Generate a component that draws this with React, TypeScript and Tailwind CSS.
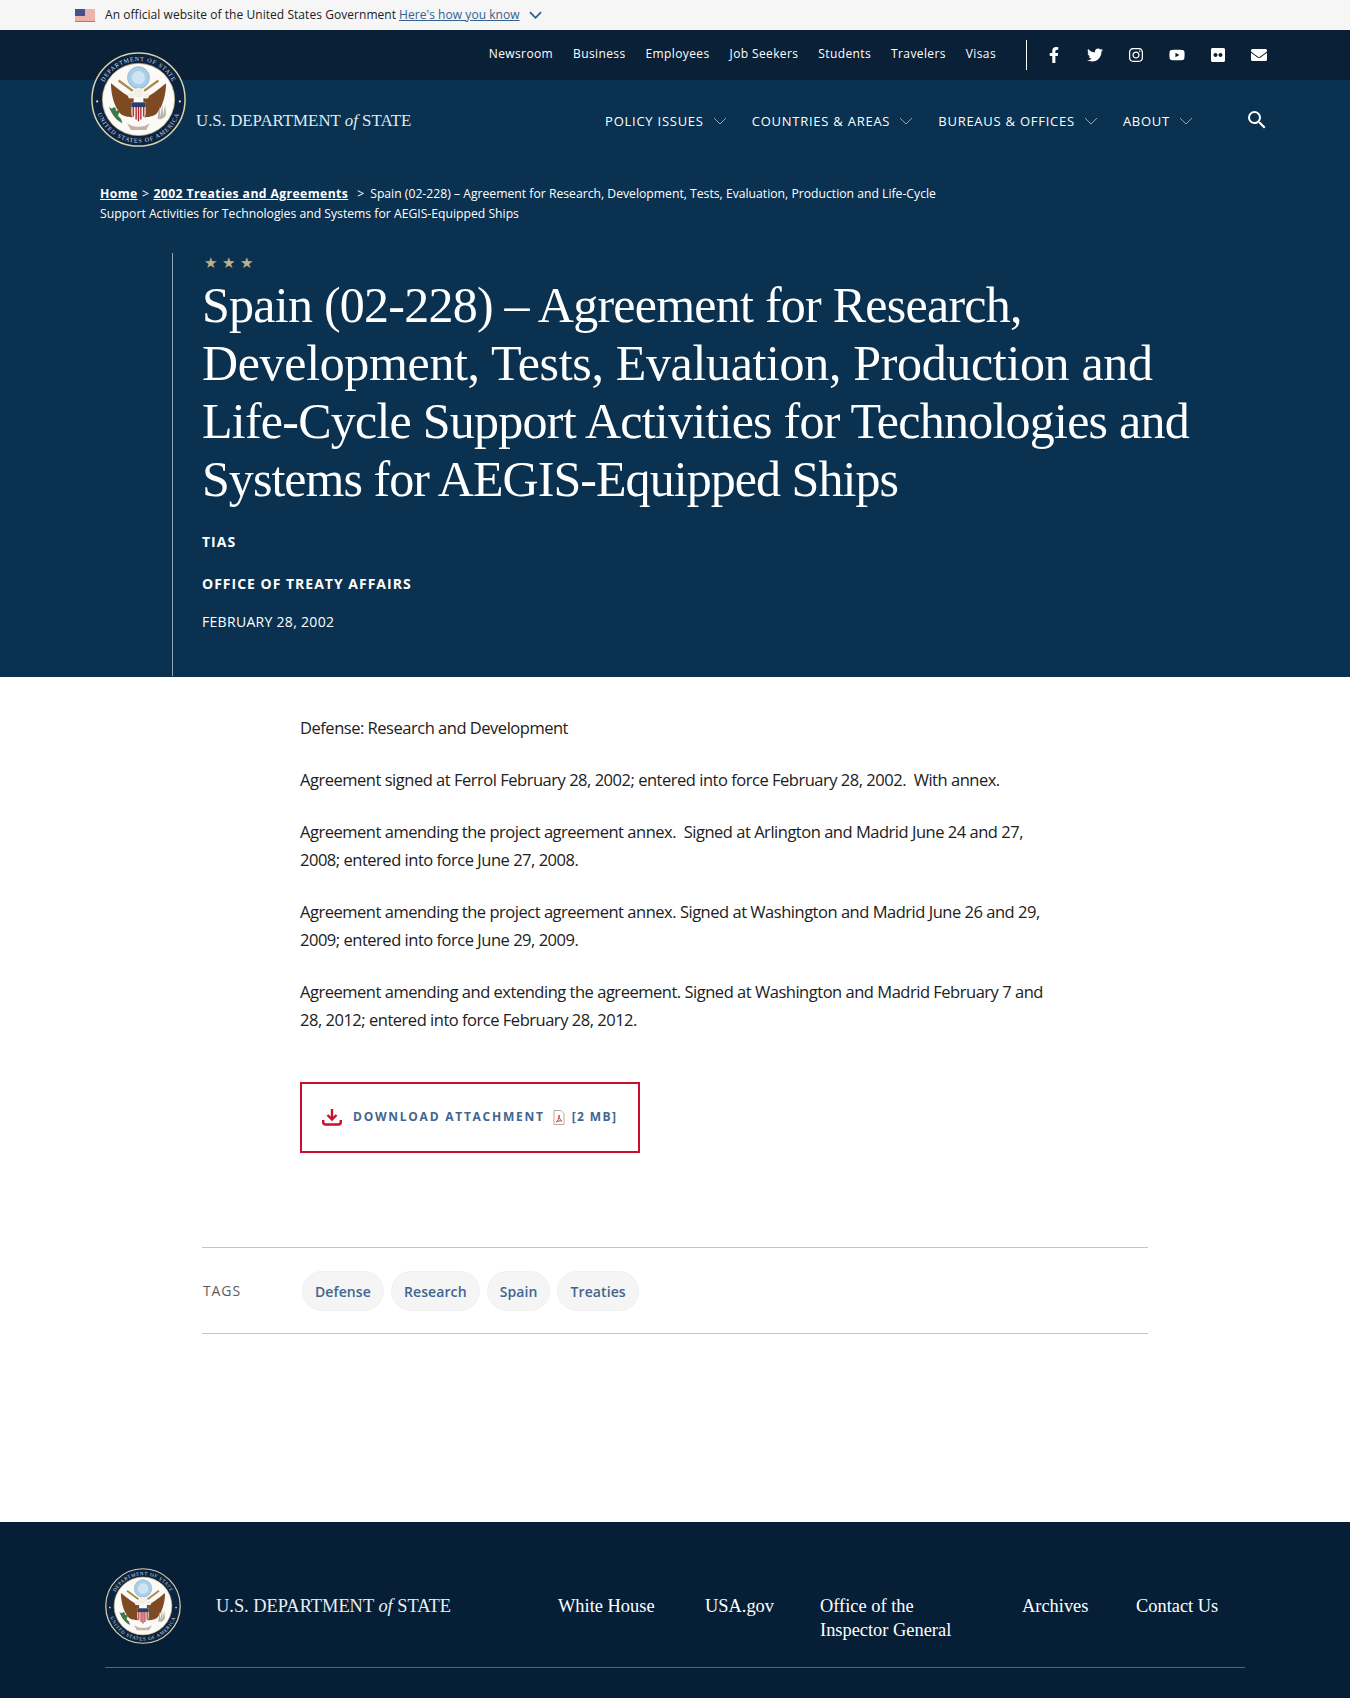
import { FaEnvelope, FaFacebookF, FaFlickr, FaInstagram, FaTwitter, FaYoutube } from "react-icons/fa";
import { MdSearch } from "react-icons/md";

const utilityLinks = ["Newsroom", "Business", "Employees", "Job Seekers", "Students", "Travelers", "Visas"];
const mainLinks = ["POLICY ISSUES", "COUNTRIES & AREAS", "BUREAUS & OFFICES", "ABOUT"];
const tags = ["Defense", "Research", "Spain", "Treaties"];
const socialIcons = [FaFacebookF, FaTwitter, FaInstagram, FaYoutube, FaFlickr, FaEnvelope];

const serif = "font-['Liberation_Serif',serif]";

const Chevron = ({ className }: { className: string }) => (
	<svg viewBox="0 0 14 8" fill="none" stroke="currentColor" className={className}>
		<path d="M1 1l6 6 6-6" />
	</svg>
);

const Flag = () => (
	<svg viewBox="0 0 20 13" className="w-5 h-[13px]">
		<rect width="20" height="13" fill="#f6f6f6" />
		<path d="M0 1h20M0 3h20M0 5h20M0 7h20M0 9h20M0 11h20" stroke="#e0705f" strokeWidth="1" />
		<rect width="10" height="7" fill="#46508f" />
		<path d="M0 12.6h20" stroke="#c0392b" strokeWidth="0.8" />
	</svg>
);

const Seal = ({ size, idPrefix }: { size: string; idPrefix: string }) => (
	<svg viewBox="0 0 100 100" className={`${size} shrink-0`}>
		<defs>
			<path id={`${idPrefix}-top`} d="M9.500 50a40.500 40.500 0 0 1 81 0" />
			<path id={`${idPrefix}-bottom`} d="M4.500 50a45.500 45.500 0 0 0 91 0" />
		</defs>
		<circle cx="50" cy="50" r="49" fill="#0c2340" stroke="#d8d2ab" strokeWidth="1.6" />
		<circle cx="50" cy="50" r="38" fill="#fbfaf6" stroke="#cbb988" strokeWidth="0.8" />
		<text fontSize="6.4" fill="#d7dfe6" letterSpacing="0.9" fontFamily="Liberation Serif, serif">
			<textPath href={`#${idPrefix}-top`} startOffset="50%" textAnchor="middle">
				DEPARTMENT OF STATE
			</textPath>
		</text>
		<text fontSize="6.4" fill="#d7dfe6" letterSpacing="1" fontFamily="Liberation Serif, serif">
			<textPath href={`#${idPrefix}-bottom`} startOffset="50%" textAnchor="middle">
				UNITED STATES OF AMERICA
			</textPath>
		</text>
		<circle cx="6.500" cy="52" r="1.1" fill="#d7dfe6" />
		<circle cx="93.500" cy="52" r="1.1" fill="#d7dfe6" />
		<circle cx="50" cy="27" r="11.500" fill="#a9cfe8" stroke="#7fa9c7" strokeWidth="0.7" />
		<circle cx="50" cy="27" r="7" fill="#cfe4f2" />
		<path d="M29 30l15 11M71 30L56 41" stroke="#a88a4a" strokeWidth="2.4" />
		<path d="M45 49C38 47 30 40 21 33c0 11 3 24 10 32 5 4 10 3 13 4z" fill="#7d4a22" />
		<path d="M55 49c7-2 15-9 24-16 0 11-3 24-10 32-5 4-10 3-13 4z" fill="#7d4a22" />
		<circle cx="50" cy="43" r="5" fill="#f3efe6" />
		<circle cx="42" cy="46" r="3" fill="#f3efe6" />
		<circle cx="58" cy="46" r="3" fill="#f3efe6" />
		<path d="M42.500 53h15v12c0 4-4 6-7.500 8-3.500-2-7.500-4-7.500-8z" fill="#f6f2ea" />
		<path d="M44.500 58v10M47.500 58v13M50 58v15M52.500 58v13M55.500 58v10" stroke="#b3202c" strokeWidth="1.4" />
		<rect x="42.500" y="53" width="15" height="5" fill="#29406f" />
		<path d="M19 58c2 2 4 2 5 0 2 1 3 2 2 4 3-1 4 0 4 2-1 1-2 2-1 4 2 1 3 3 4 7-5-2-11-8-14-17z" fill="#3b7a45" />
		<path d="M70 70l2-13 1 11 2-13 1 12 2-12 1 11c-2 4-6 6-9 4z" fill="#b8b6a8" />
		<path d="M38 75c7 5 17 5 24 0l-4 7H42z" fill="#c4b3a8" />
	</svg>
);

const Wordmark = ({ className }: { className: string }) => (
	<div className={`${serif} whitespace-nowrap ${className}`}>
		U.S. DEPARTMENT <i>of</i> STATE
	</div>
);

export default function App() {
	return (
		<div className="font-['Open_Sans',sans-serif] text-[#212121] bg-white">
			{/* gov banner */}
			<div className="h-[30px] bg-[#f6f6f6] flex items-center pl-[75px] text-[12px] tracking-[0.05px]">
				<Flag />
				<span className="ml-[10px]">An official website of the United States Government</span>
				<a className="ml-[3px] text-[#33618f] underline">Here's how you know</a>
				<Chevron className="ml-[9px] w-[13px] h-[8px] text-[#33618f] stroke-2" />
			</div>

			{/* utility nav */}
			<div className="h-[50px] bg-[#0a2036] flex items-center justify-end pr-[71px] text-white">
				<div className="flex items-center text-[12px] leading-[16px] -mt-[2px] tracking-[0.38px] gap-[20px]">
					{utilityLinks.map((l) => (
						<a key={l}>{l}</a>
					))}
				</div>
				<div className="ml-[30px] w-px h-[30px] bg-white" />
				<div className="flex items-center ml-[6px] text-[16px]">
					{socialIcons.map((Icon, i) => (
						<div key={i} className="w-[41px] flex justify-center">
							<Icon />
						</div>
					))}
				</div>
			</div>

			{/* hero */}
			<div className="bg-[#0a314f] text-white h-[597px]">
				<div className="h-[80px] flex items-start pl-[91px] pr-[82px]">
					<div className="relative z-10 -mt-[28px] shrink-0">
						<Seal size="w-[95px] h-[95px]" idPrefix="head" />
					</div>
					<Wordmark className="ml-[10px] mt-[29px] text-[16.85px] leading-[24px] text-[#dfe9f1]" />
					<div className="ml-auto flex items-center gap-[25px] mt-[29px] text-[13px] leading-[24px] font-medium tracking-[0.75px]">
						{mainLinks.map((l) => (
							<a key={l} className="flex items-center gap-[9px] whitespace-nowrap">
								{l}
								<Chevron className="w-[14px] h-[8px] text-[#8ba3b8]" />
							</a>
						))}
						<MdSearch className="ml-[27px] -mt-[3px] -mr-[1px] text-[24px]" />
					</div>
				</div>

				<div className="pl-[100px] mt-[24px] text-[12.2px] leading-[20px]">
					<div className="flex whitespace-nowrap">
						<a className="font-bold underline tracking-[0.4px]">Home</a>
						<span className="mx-[4.400px]">&gt;</span>
						<a className="font-bold underline tracking-[0.4px]">2002 Treaties and Agreements</a>
						<span className="ml-[9px] mr-[6px]">&gt;</span>
						<span>Spain (02-228) – Agreement for Research, Development, Tests, Evaluation, Production and Life-Cycle</span>
					</div>
					<div>Support Activities for Technologies and Systems for AEGIS-Equipped Ships</div>
				</div>

				<div className="ml-[172px] mt-[30px] h-[423px] border-l border-[#8fa3b5] pl-[29px]">
					<div className="ml-[2px] -mt-[1px] text-[#c2ae8b] text-[15px] leading-[18px] tracking-[5px]">★★★</div>
					<h1 className={`${serif} text-[50px] leading-[58px] tracking-[-0.75px] mt-[5px] whitespace-nowrap`}>
						<span className="block">Spain (02-228) – Agreement for Research,</span>
						<span className="block tracking-[-0.34px]">Development, Tests, Evaluation, Production and</span>
						<span className="block">Life-Cycle Support Activities for Technologies and</span>
						<span className="block tracking-[-0.95px]">Systems for AEGIS-Equipped Ships</span>
					</h1>
					<div className="mt-[24px] text-[14px] leading-[20px] font-bold tracking-[1px]">TIAS</div>
					<div className="mt-[22px] text-[14px] leading-[20px] font-bold tracking-[1px]">OFFICE OF TREATY AFFAIRS</div>
					<div className="mt-[18px] text-[14px] leading-[20px] tracking-[0.3px]">FEBRUARY 28, 2002</div>
				</div>
			</div>

			{/* article */}
			<div className="h-[845px]">
				<div className="pl-[300px] pt-[37px] w-[1060px] text-[16.5px] leading-[28px] tracking-[-0.48px] flex flex-col gap-[24px]">
					<p>Defense: Research and Development</p>
					<p>Agreement signed at Ferrol February 28, 2002; entered into force February 28, 2002.&nbsp; With annex.</p>
					<p>Agreement amending the project agreement annex.&nbsp; Signed at Arlington and Madrid June 24 and 27, 2008; entered into force June 27, 2008.</p>
					<p>Agreement amending the project agreement annex. Signed at Washington and Madrid June 26 and 29, 2009; entered into force June 29, 2009.</p>
					<p>Agreement amending and extending the agreement. Signed at Washington and Madrid February 7 and 28, 2012; entered into force February 28, 2012.</p>
				</div>

				<a className="ml-[300px] mt-[48px] w-[340px] h-[71px] border-2 border-[#c8102e] flex items-center pl-[20px] text-[12px] leading-[16px] font-bold tracking-[1.75px] text-[#3f6590]">
					<svg viewBox="0 0 20 18" fill="none" stroke="#c8102e" strokeWidth="2.4" className="w-5 h-[18px] -mt-[2px]">
						<path d="M10 1v10M5.500 7l4.500 4.500L14.500 7M1.200 12v2c0 1.500 1 2.500 2.500 2.500h12.600c1.500 0 2.500-1 2.500-2.500v-2" />
					</svg>
					<span className="ml-[11px] -mt-[2px]">DOWNLOAD ATTACHMENT</span>
					<svg viewBox="0 0 12 15" fill="none" className="ml-[8px] w-3 h-[15px]">
						<path d="M1 .5h7l3 3v11H1z" fill="#fff" stroke="#b9a9a0" />
						<path d="M3 12c2-1 3-4 3-7 0 3 1 5 3 6-2-.500-4 0-6 1z" stroke="#d0453a" />
					</svg>
					<span className="ml-[7px] -mt-[2px] tracking-[1.4px]">[2 MB]</span>
				</a>

				<div className="ml-[202px] mt-[94px] w-[946px] h-[87px] border-y border-[#c4c4c4] flex items-center">
					<div className="w-[100px] pl-px text-[14px] font-medium text-[#5c5c5c] tracking-[0.9px]">TAGS</div>
					<div className="flex gap-[7px]">
						{tags.map((t) => (
							<a key={t} className="h-[40px] px-[12px] pt-[2px] flex items-center rounded-[20px] bg-[#f5f5f5] border border-[#f1f1f1] text-[14px] font-semibold tracking-[0.1px] text-[#3f6590]">
								{t}
							</a>
						))}
					</div>
				</div>
			</div>

			{/* footer */}
			<div className="bg-[#061f37] h-[176px] text-white px-[105px] pt-[46px] overflow-hidden">
				<div className="flex items-start h-[100px] border-b border-[#4a6580]">
					<Seal size="w-[76px] h-[76px]" idPrefix="foot" />
					<Wordmark className="ml-[35px] mt-[25px] text-[18.4px] leading-[26px] text-[#e8eef3]" />
					<div className={`${serif} ml-[107px] mt-[26px] flex items-start text-[18.400px] leading-[24px]`}>
						<a className="w-[147px]">White House</a>
						<a className="w-[115px]">USA.gov</a>
						<a className="w-[202px]">Office of the<br />Inspector General</a>
						<a className="w-[114px]">Archives</a>
						<a className="whitespace-nowrap">Contact Us</a>
					</div>
				</div>
			</div>
		</div>
	);
}
